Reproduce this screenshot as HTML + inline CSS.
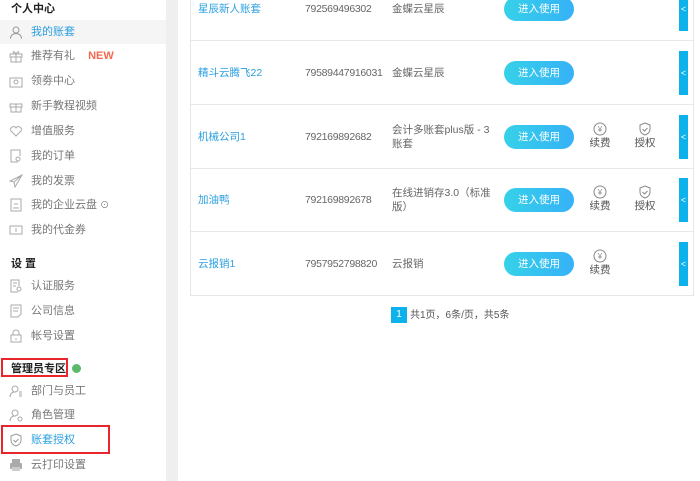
<!DOCTYPE html>
<html><head><meta charset="utf-8"><style>
*{margin:0;padding:0;box-sizing:border-box}
body{width:700px;height:481px;overflow:hidden;background:#fff;font-family:"Liberation Sans","Noto Sans CJK SC",sans-serif;font-size:11px;color:#555;position:relative}
.side{position:absolute;left:0;top:0;width:166px;height:481px;background:#fff}
.strip{position:absolute;left:166px;top:0;width:12px;height:481px;background:#efefef}
.h{position:absolute;left:11px;font-size:11px;color:#222;font-weight:bold}
.it{position:absolute;left:0;width:166px;height:24px;line-height:24px;padding-left:31px;color:#777}
.it svg{position:absolute;left:9px;top:5px}
.act{background:#f5f5f5;color:#2a9fe0}
.red{position:absolute;border:2px solid #e8262b}
.tbl{position:absolute;left:190px;top:-30px;width:504px;height:326px;border:1px solid #e6e6e6;border-top:none}
.row{position:absolute;left:0;width:502px;height:64px;border-bottom:1px solid #e8e8e8}
.c{position:absolute;top:0;height:63px;display:flex;align-items:center;font-size:10.5px;line-height:14px;color:#666}
.n{letter-spacing:-0.3px}
.btn{position:absolute;left:313px;width:70px;height:24px;border-radius:12px;background:linear-gradient(90deg,#36d1e8,#36b2f7);color:#fff;text-align:center;line-height:24px;font-size:10.5px}
.tab{position:absolute;left:488px;width:9px;height:44px;background:#0db2ec;color:#fff;font-size:9px;line-height:44px;text-align:center}
.ic{position:absolute;width:24px;text-align:center;font-size:10.5px;color:#555;line-height:12px}
.ic svg{display:block;margin:0 auto 1px}
</style></head><body>
<div class="side">
<div class="h" style="top:0">个人中心</div>
<div class="it act" style="top:20px"><svg width="14" height="14" viewBox="0 0 14 14" fill="none" stroke="#999"><circle cx="7" cy="5" r="3"/><path d="M1.5 13.5c0-3 2.5-5 5.5-5s5.5 2 5.5 5"/></svg>我的账套</div>
<div class="it" style="top:44px"><svg width="14" height="14" viewBox="0 0 14 14" fill="none" stroke="#aaa"><rect x="1" y="5" width="12" height="3"/><rect x="2" y="8" width="10" height="5"/><path d="M7 5v8M7 5C5 1 3 3 5 5M7 5c2-4 4-2 2 0"/></svg>推荐有礼 <b style="color:#f56a4e;margin-left:10px;font-size:11px">NEW</b></div>
<div class="it" style="top:69px"><svg width="14" height="14" viewBox="0 0 14 14" fill="none" stroke="#aaa"><rect x="1" y="4" width="12" height="9"/><circle cx="7" cy="8" r="2"/></svg>领劵中心</div>
<div class="it" style="top:94px"><svg width="14" height="14" viewBox="0 0 14 14" fill="none" stroke="#aaa"><rect x="1" y="5" width="12" height="3"/><rect x="2" y="8" width="10" height="5"/><path d="M7 5v8"/></svg>新手教程视频</div>
<div class="it" style="top:119px"><svg width="14" height="14" viewBox="0 0 14 14" fill="none" stroke="#aaa"><path d="M7 12L2 7a2.5 2.5 0 015-3 2.5 2.5 0 015 3z"/></svg>增值服务</div>
<div class="it" style="top:144px"><svg width="14" height="14" viewBox="0 0 14 14" fill="none" stroke="#aaa"><path d="M9 13H2V1h9v6"/><circle cx="9" cy="10" r="2"/></svg>我的订单</div>
<div class="it" style="top:169px"><svg width="14" height="14" viewBox="0 0 14 14" fill="none" stroke="#aaa"><path d="M13 1L1 7l4 1 1 5 7-12zM5 8l8-7"/></svg>我的发票</div>
<div class="it" style="top:193px"><svg width="14" height="14" viewBox="0 0 14 14" fill="none" stroke="#aaa"><rect x="2" y="1" width="10" height="12"/><path d="M4 10h6M5 6h4"/></svg>我的企业云盘 <span style="font-size:9px">⊙</span></div>
<div class="it" style="top:218px"><svg width="14" height="14" viewBox="0 0 14 14" fill="none" stroke="#aaa"><rect x="1" y="3" width="12" height="8"/><path d="M7 5v4"/></svg>我的代金券</div>
<div class="h" style="top:255px">设 置</div>
<div class="it" style="top:274px"><svg width="14" height="14" viewBox="0 0 14 14" fill="none" stroke="#aaa"><path d="M9 13H2V1h8v6M4 4h4M4 7h3"/><circle cx="10" cy="10" r="2"/></svg>认证服务</div>
<div class="it" style="top:299px"><svg width="14" height="14" viewBox="0 0 14 14" fill="none" stroke="#aaa"><path d="M2 13V1h10v9l-3 3zM4 4h6M4 7h5"/></svg>公司信息</div>
<div class="it" style="top:324px"><svg width="14" height="14" viewBox="0 0 14 14" fill="none" stroke="#aaa"><rect x="2" y="6" width="10" height="7"/><path d="M4 6V4a3 3 0 016 0v2M7 9v2"/></svg>帐号设置</div>
<div class="h" style="top:360px">管理员专区 <span style="display:inline-block;width:9px;height:9px;border-radius:50%;background:#5cb96a;vertical-align:-1px;margin-left:3px"></span></div>
<div class="red" style="left:1px;top:358px;width:67px;height:19px"></div>
<div class="it" style="top:379px"><svg width="14" height="14" viewBox="0 0 14 14" fill="none" stroke="#aaa"><circle cx="6" cy="5" r="3"/><path d="M1 13c0-3 2-5 5-5M10 8h3M10 10h3M10 12h3"/></svg>部门与员工</div>
<div class="it" style="top:403px"><svg width="14" height="14" viewBox="0 0 14 14" fill="none" stroke="#aaa"><circle cx="6" cy="5" r="3"/><path d="M1 13c0-3 2-5 5-5"/><circle cx="11" cy="11" r="2"/></svg>角色管理</div>
<div class="it" style="top:428px;color:#2a9fe0"><svg width="14" height="14" viewBox="0 0 14 14" fill="none" stroke="#999"><path d="M7 1l5 2v4c0 3-2 5-5 6-3-1-5-3-5-6V3z"/><path d="M4.5 7l2 2 3-3"/></svg>账套授权</div>
<div class="red" style="left:1px;top:425px;width:109px;height:29px"></div>
<div class="it" style="top:453px"><svg width="14" height="14" viewBox="0 0 14 14" fill="#aaa"><rect x="3" y="1" width="8" height="4"/><rect x="1" y="5" width="12" height="6" rx="1"/><rect x="3" y="9" width="8" height="4" fill="#ccc"/></svg>云打印设置</div>
</div>
<div class="strip"></div>
<div class="tbl">
<div class="row" style="top:7px">
<div class="c" style="left:7px;color:#2a9fe0">星辰新人账套</div><div class="c n" style="left:114px">792569496302</div><div class="c" style="left:201px">金蝶云星辰</div>
<div class="btn" style="top:20px">进入使用</div><div class="tab" style="top:10px">&lt;</div></div>
<div class="row" style="top:71px">
<div class="c" style="left:7px;color:#2a9fe0">精斗云腾飞22</div><div class="c n" style="left:114px">79589447916031</div><div class="c" style="left:201px">金蝶云星辰</div>
<div class="btn" style="top:20px">进入使用</div><div class="tab" style="top:10px">&lt;</div></div>
<div class="row" style="top:135px">
<div class="c" style="left:7px;color:#2a9fe0">机械公司1</div><div class="c n" style="left:114px">792169892682</div><div class="c" style="left:201px;width:100px">会计多账套plus版 - 3账套</div>
<div class="btn" style="top:20px">进入使用</div>
<div class="ic" style="left:397px;top:17px"><svg width="14" height="14" viewBox="0 0 14 14" fill="none" stroke="#888"><circle cx="7" cy="7" r="6"/><text x="7" y="10" font-size="8" text-anchor="middle" fill="#888" stroke="none">¥</text></svg>续费</div>
<div class="ic" style="left:442px;top:17px"><svg width="14" height="14" viewBox="0 0 14 14" fill="none" stroke="#888"><path d="M7 1l5 2v4c0 3-2 5-5 6-3-1-5-3-5-6V3z"/><path d="M4.5 7l2 2 3-3"/></svg>授权</div>
<div class="tab" style="top:10px">&lt;</div></div>
<div class="row" style="top:198px">
<div class="c" style="left:7px;color:#2a9fe0">加油鸭</div><div class="c n" style="left:114px">792169892678</div><div class="c" style="left:201px;width:100px">在线进销存3.0（标准版）</div>
<div class="btn" style="top:20px">进入使用</div>
<div class="ic" style="left:397px;top:17px"><svg width="14" height="14" viewBox="0 0 14 14" fill="none" stroke="#888"><circle cx="7" cy="7" r="6"/><text x="7" y="10" font-size="8" text-anchor="middle" fill="#888" stroke="none">¥</text></svg>续费</div>
<div class="ic" style="left:442px;top:17px"><svg width="14" height="14" viewBox="0 0 14 14" fill="none" stroke="#888"><path d="M7 1l5 2v4c0 3-2 5-5 6-3-1-5-3-5-6V3z"/><path d="M4.5 7l2 2 3-3"/></svg>授权</div>
<div class="tab" style="top:10px">&lt;</div></div>
<div class="row" style="top:262px;border-bottom:none">
<div class="c" style="left:7px;color:#2a9fe0">云报销1</div><div class="c n" style="left:114px">7957952798820</div><div class="c" style="left:201px">云报销</div>
<div class="btn" style="top:20px">进入使用</div>
<div class="ic" style="left:397px;top:17px"><svg width="14" height="14" viewBox="0 0 14 14" fill="none" stroke="#888"><circle cx="7" cy="7" r="6"/><text x="7" y="10" font-size="8" text-anchor="middle" fill="#888" stroke="none">¥</text></svg>续费</div>
<div class="tab" style="top:10px">&lt;</div></div>
</div>
<div style="position:absolute;left:391px;top:307px;width:16px;height:16px;background:#0db2ec;color:#fff;font-size:10px;text-align:center;line-height:16px">1</div>
<div style="position:absolute;left:410px;top:308px;line-height:16px;font-size:10px;color:#555">共1页，6条/页，共5条</div>
</body></html>
